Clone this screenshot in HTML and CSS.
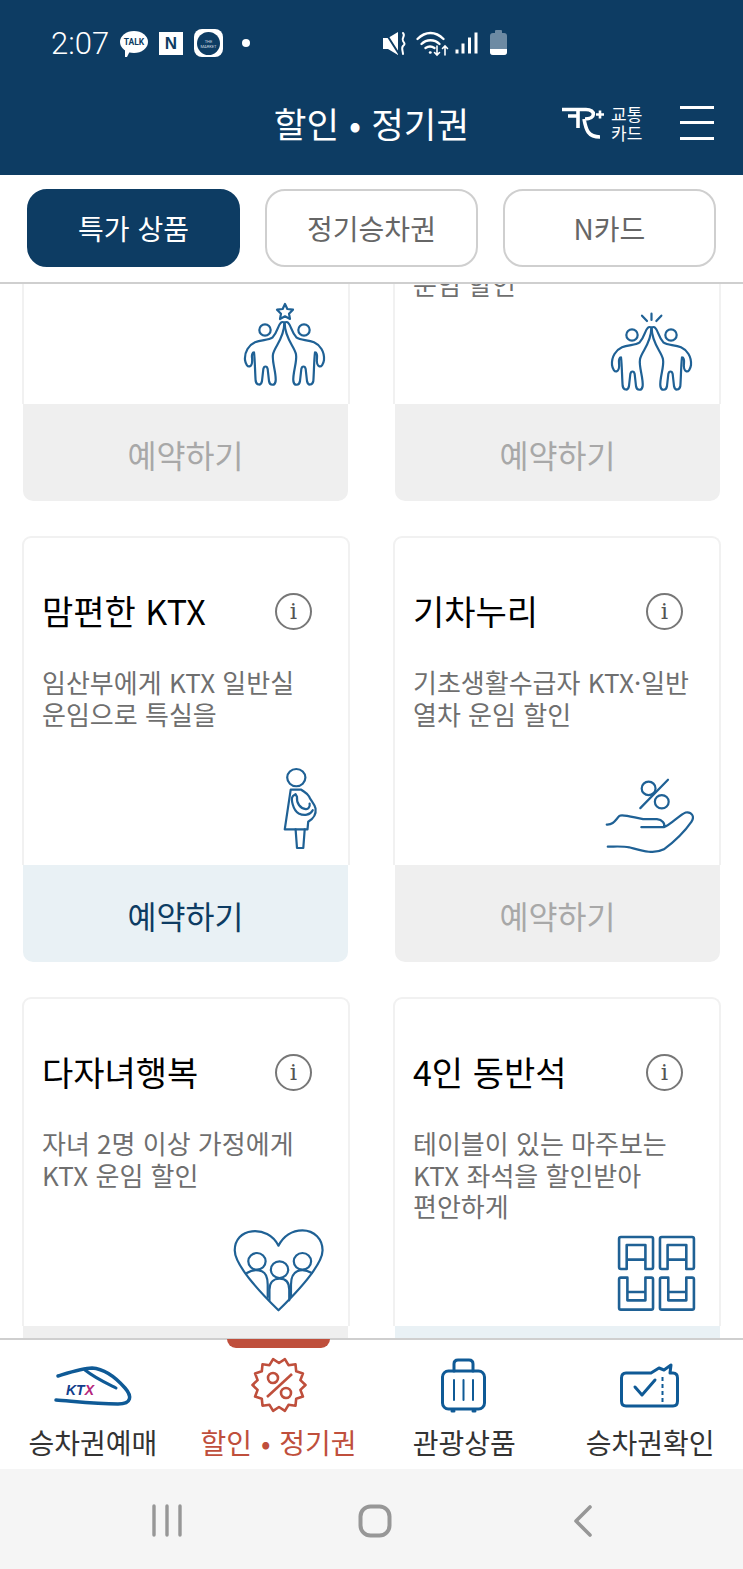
FILE: index.html
```html
<!DOCTYPE html>
<html lang="ko">
<head>
<meta charset="UTF-8" />
<title>할인 · 정기권</title>
<meta name="viewport" content="width=device-width,initial-scale=1" />
<link rel="stylesheet" href="styles.css">
</head>
<body>
<div id="app">
  <header id="top">
    <div id="status-bar">
      <span class="clock">2:07</span>
      <span class="talk">TALK</span>
      <span class="naver">N</span>
      <span class="market"><span>THE<br>MARKET</span></span>
      <span class="dot"></span>
      <svg class="st-icons" viewBox="380 26 130 34" width="130" height="34" fill="none" stroke="#fff" stroke-linecap="round">
        <path d="M383 38h5l10-6v23l-10-6h-5z" fill="#fff" stroke="none"/>
        <path d="M385 32l14 22" stroke="#0d3c63" stroke-width="2"/>
        <path d="M403 33c3 3-2 5 0 8s2 3 0 5 0 5 0 8" stroke-width="2"/>
        <path d="M417.500 39c8-8 18-8 26 0M421.500 44c5-5 13-5 18 0M425.500 48c3-2 6-2 9 0" stroke-width="2.400"/>
        <path d="M430 52.500h.5" stroke-width="2.400"/>
        <path d="M437 46v9M434.500 52.500l2.500 2.500 2.500-2.500M445 55v-9M442.500 48.500l2.500-2.500 2.500 2.500" stroke-width="1.600"/>
        <path d="M457 49.500v4M463 43.500v10M469.500 37.500v16M476 32.500v21" stroke-width="3" stroke-linecap="butt"/>
        <rect x="490" y="33" width="17" height="22" rx="3" fill="#6d8aa3" stroke="none"/>
        <rect x="495" y="30" width="7" height="5" rx="1" fill="#6d8aa3" stroke="none"/>
        <path d="M490 49h17v3a3 3 0 0 1-3 3h-11a3 3 0 0 1-3-3z" fill="#fff" stroke="none"/>
      </svg>
    </div>
    <div id="title-bar">
      <div></div>
      <h1>할인 • 정기권</h1>
      <div class="title-right">
        <svg class="tc-logo" viewBox="560 105 48 36" width="48" height="36" fill="none" stroke="#fff" stroke-width="3.600">
          <path d="M562 109.500H586C596 109.500 596 119 585 119M568 116H577M578 109V128M584 119C586 130 588 137 600 137"/>
          <path d="M596 114.500H604M600 110.500V118.500" stroke-width="2.600"/>
        </svg>
        <span class="tc-text">교통<br>카드</span>
        <button id="menu-btn" aria-label="메뉴"><i></i><i></i><i></i></button>
      </div>
    </div>
  </header>

  <nav id="tabs">
    <button class="tab active">특가 상품</button>
    <button class="tab">정기승차권</button>
    <button class="tab">N카드</button>
  </nav>

  <main id="list">
    <div id="cards">
      <section class="card">
        <div class="card-head">
          <div class="card-title"><h2>힘내라 청춘</h2><span class="info">i</span></div>
          <p>청년에게 KTX 운임 할인</p>
          <svg class="ico hf-a" viewBox="0 0 300 300">
            <path d="M150 27L157 42L174 44L162 56L165 72L150 64L135 72L138 56L126 44L143 42Z"/>
            <g id="high-five">
              <circle cx="90" cy="105" r="17"/>
              <circle cx="207" cy="105" r="17"/>
              <path id="hf-body" d="M137 84C128 92 128 112 112 128C100 136 78 134 60 142C42 150 28 170 30 195C32 208 38 216 44 214C52 212 52 198 51 188C50 180 52 172 57 172C60 195 60 235 62 258C64 270 78 274 81 258L85 222C87 212 96 212 98 222L102 258C104 272 120 274 122 258C124 232 110 200 114 178C118 155 148 130 148 84C148 80 140 80 137 84Z"/>
              <use href="#hf-body" transform="translate(297 0) scale(-1 1)"/>
            </g>
          </svg>
        </div>
        <button class="book off">예약하기</button>
      </section>
      <section class="card">
        <div class="card-head">
          <div class="card-title"><h2>청소년 드림</h2><span class="info">i</span></div>
          <p>만 13세 이상 18세 이하<br>청소년에게 KTX 등<br>운임 할인</p>
          <svg class="ico hf-b" viewBox="0 0 300 300">
            <use href="#high-five"/>
            <path d="M148.500 41V60M120 47L135 63M178 47L163 63"/>
          </svg>
        </div>
        <button class="book off">예약하기</button>
      </section>

      <section class="card">
        <div class="card-head">
          <div class="card-title"><h2>맘편한 KTX</h2><span class="info">i</span></div>
          <p>임산부에게 KTX 일반실<br>운임으로 특실을</p>
          <svg class="ico mom" viewBox="240 80 100 250" preserveAspectRatio="none">
            <circle cx="278" cy="112" r="26"/>
            <path d="M262 148L245 268H310L312 245C328 235 335 220 333 205C330 190 318 180 314 168C308 158 300 155 292 148Z"/>
            <path d="M268 168C262 175 268 210 285 220C300 228 318 225 325 210M268 168L276 162L280 170C278 190 290 205 305 207C312 208 318 200 316 190"/>
            <path d="M276 268L280 324H298L302 268"/>
          </svg>
        </div>
        <button class="book on">예약하기</button>
      </section>
      <section class="card">
        <div class="card-head">
          <div class="card-title"><h2>기차누리</h2><span class="info">i</span></div>
          <p>기초생활수급자 KTX·일반<br>열차 운임 할인</p>
          <svg class="ico hand" viewBox="1170 115 260 230" preserveAspectRatio="none">
            <path d="M1352 120L1272 205"/>
            <circle cx="1296" cy="146" r="20"/>
            <circle cx="1334" cy="186" r="20"/>
            <path d="M1175 254C1195 255 1200 240 1212 228C1220 222 1250 232 1280 238L1320 238C1335 240 1345 250 1340 262L1275 262M1340 262C1360 255 1385 225 1403 218C1420 215 1430 230 1420 245C1400 275 1370 305 1340 328C1310 345 1270 330 1240 322C1220 318 1200 320 1178 320"/>
          </svg>
        </div>
        <button class="book off">예약하기</button>
      </section>

      <section class="card">
        <div class="card-head">
          <div class="card-title"><h2>다자녀행복</h2><span class="info">i</span></div>
          <p>자녀 2명 이상 가정에게<br>KTX 운임 할인</p>
          <svg class="ico family" viewBox="95 55 265 252" preserveAspectRatio="none">
            <path d="M226 108C210 75 180 62 150 65C120 68 100 90 100 122C100 170 180 255 226 302C272 255 353 170 353 122C353 90 330 62 295 62C265 62 240 80 226 108Z"/>
            <circle cx="164" cy="155" r="25"/>
            <circle cx="295" cy="155" r="25"/>
            <circle cx="229" cy="180" r="25"/>
            <path d="M200 272V240C200 215 215 207 229 207C245 207 257 215 257 240V272"/>
            <path d="M135 190C150 180 165 180 178 185C190 190 195 205 195 225V262M322 190C305 180 290 180 280 185C265 192 262 205 262 225V262"/>
          </svg>
        </div>
        <button class="book off">예약하기</button>
      </section>
      <section class="card">
        <div class="card-head">
          <div class="card-title"><h2>4인 동반석</h2><span class="info">i</span></div>
          <p>테이블이 있는 마주보는<br>KTX 좌석을 할인받아<br>편안하게</p>
          <svg class="ico seats" viewBox="1204 74 228 228" preserveAspectRatio="none">
            <path id="seat-top" d="M1232 176H1215Q1210 176 1210 171V85Q1210 80 1215 80H1303Q1308 80 1308 85V171Q1308 176 1303 176H1286V104H1232V176M1232 148H1286"/>
            <use href="#seat-top" transform="translate(118 0)"/>
            <path id="seat-low" d="M1234 202H1215Q1210 202 1210 207V293Q1210 298 1215 298H1303Q1308 298 1308 293V207Q1308 202 1303 202H1286V270H1234V202M1234 245H1286"/>
            <use href="#seat-low" transform="translate(118 0)"/>
          </svg>
        </div>
        <button class="book on">예약하기</button>
      </section>
    </div>
  </main>

  <footer id="bottom-nav">
    <a class="nav-item">
      <svg class="nav-icon" viewBox="50 1360 86 44" width="86" height="44" fill="none" stroke="#0f5a96" stroke-width="3.500" stroke-linecap="round">
        <path d="M58 1373C71 1369 83 1365 92 1365C106 1366 118 1377 125 1385C132 1393 132 1401 118 1401C95 1401 71 1398 56 1397"/>
        <path d="M85 1367C95 1375 106 1380 116 1385" stroke-width="3"/>
        <text x="66" y="1392" class="ktx">KT<tspan class="ktx-x">X</tspan></text>
      </svg>
      <span>승차권예매</span>
    </a>
    <a class="nav-item current">
      <svg class="nav-icon" viewBox="-28 -28 56 56" width="56" height="56" fill="none" stroke="#bf4f3c" stroke-width="2.600" stroke-linejoin="round">
        <path d="M26.500 0L21.400 4.900L23.900 11.500L17.200 13.700L16.500 20.700L9.500 19.800L5.900 25.800L0 22L-5.900 25.800L-9.500 19.800L-16.500 20.700L-17.200 13.700L-23.900 11.500L-21.400 4.900L-26.500 0L-21.400 -4.900L-23.900 -11.500L-17.200 -13.700L-16.500 -20.700L-9.500 -19.800L-5.900 -25.800L0 -22L5.900 -25.800L9.500 -19.800L16.500 -20.700L17.200 -13.700L23.900 -11.500L21.400 -4.900Z"/>
        <path d="M-12 12L13 -11"/>
        <circle cx="-6" cy="-7" r="5"/>
        <circle cx="7" cy="8" r="5"/>
      </svg>
      <span>할인 • 정기권</span>
    </a>
    <a class="nav-item">
      <svg class="nav-icon" viewBox="440 1354 52 56" width="52" height="56" fill="none" stroke="#0f5a96" stroke-width="3" stroke-linecap="round">
        <rect x="444.500" y="1368" width="42" height="38" rx="6"/>
        <path d="M456 1368V1361Q456 1357 460 1357H471Q475 1357 475 1361V1368"/>
        <path d="M456 1377V1397M465.500 1377V1397M475 1377V1397" stroke-width="2"/>
        <path d="M454 1408h2M475 1408h2"/>
      </svg>
      <span>관광상품</span>
    </a>
    <a class="nav-item">
      <svg class="nav-icon" viewBox="618 1358 66 50" width="66" height="50" fill="none" stroke="#0f5a96" stroke-width="3" stroke-linecap="round" stroke-linejoin="round">
        <path d="M652 1371H627Q622.500 1371 622.500 1376V1399Q622.500 1404 627 1404H674Q678.500 1404 678.500 1399V1376Q678.500 1371 674 1371H671L672 1363L665 1368L660 1366L652 1371Z"/>
        <path d="M663.500 1375V1401" stroke-width="2" stroke-dasharray="4 3" stroke-linecap="butt"/>
        <path d="M636 1385L643 1393L656 1378"/>
      </svg>
      <span>승차권확인</span>
    </a>
  </footer>

  <div id="system-nav">
    <svg viewBox="145 1500 455 42" width="455" height="42" fill="none" stroke="#979797" stroke-linecap="round" stroke-linejoin="round">
      <path d="M154 1506V1535M167 1506V1535M180 1506V1535" stroke-width="3.400"/>
      <rect x="360.500" y="1506.500" width="29" height="29" rx="10" stroke-width="4"/>
      <path d="M590 1507L576 1521L590 1535" stroke-width="3.600"/>
    </svg>
  </div>
</div>
</body>
</html>
```

FILE: styles.css
```css
:root {
  --navy: #0d3c63;
  --line: #cfcfcf;
  --icon: #1f6195;
  --red: #bf4f3c;
}
html, body {
  height: 100%;
  margin: 0;
  padding: 0;
  background: #fff;
  font-family: 'Noto Sans CJK KR', 'Noto Sans', sans-serif;
}
button {
  font-family: inherit;
  cursor: pointer;
}
#app {
  height: 1569px;
  display: flex;
  flex-direction: column;
  overflow: hidden;
}

/* Header */
#top {
  flex: none;
  height: 175px;
  background: var(--navy);
  color: #fff;
}
#status-bar {
  height: 86px;
  box-sizing: border-box;
  padding-left: 51px;
  display: flex;
  align-items: center;
}
.clock {
  font-family: Roboto, sans-serif;
  font-size: 31px;
  font-weight: 300;
  width: 69px;
}
.talk {
  position: relative;
  width: 28px;
  height: 22px;
  margin-top: -3px;
  border-radius: 50%;
  background: #fff;
  color: var(--navy);
  font-family: Roboto, sans-serif;
  font-size: 8.500px;
  font-weight: 700;
  line-height: 22px;
  text-align: center;
}
/* bubble tail */
.talk::after {
  content: "";
  position: absolute;
  left: 5px;
  top: 18px;
  border-left: 2px solid #fff;
  border-right: 4px solid transparent;
  border-top: 8px solid #fff;
}
.naver {
  width: 24px;
  height: 23px;
  margin-left: 11px;
  background: #fff;
  color: var(--navy);
  font-family: 'Liberation Sans', sans-serif;
  font-size: 17px;
  font-weight: 700;
  line-height: 23px;
  text-align: center;
}
.market {
  width: 29px;
  height: 28px;
  margin-left: 11px;
  border-radius: 8px;
  background: #fff;
  display: flex;
  align-items: center;
  justify-content: center;
}
.market span {
  width: 23px;
  height: 23px;
  border-radius: 50%;
  background: var(--navy);
  color: #cfd8e0;
  font-family: Roboto, sans-serif;
  font-size: 4px;
  line-height: 5px;
  text-align: center;
  padding-top: 7px;
  box-sizing: border-box;
}
.dot {
  width: 8px;
  height: 8px;
  margin-left: 19px;
  border-radius: 50%;
  background: #fff;
}
.st-icons {
  margin-left: 130px;
}
#title-bar {
  height: 89px;
  display: grid;
  grid-template-columns: 1fr auto 1fr;
  align-items: center;
  margin-top: -8px;
}
h1 {
  margin: 0;
  font-size: 35.500px;
  font-weight: 400;
  line-height: 50px;
}
.title-right {
  display: flex;
  align-items: center;
  justify-content: flex-end;
  padding-right: 29px;
}
.tc-text {
  font-size: 17px;
  line-height: 19px;
  margin-left: 3px;
  width: 31px;
  white-space: nowrap;
}
#menu-btn {
  width: 34px;
  height: 34px;
  margin-left: 38px;
  padding: 0;
  border: none;
  background: none;
  display: flex;
  flex-direction: column;
  justify-content: space-between;
}
#menu-btn i {
  display: block;
  height: 3px;
  background: #fff;
}

/* Tabs */
#tabs {
  flex: none;
  height: 109px;
  box-sizing: border-box;
  padding: 14px 27px 0 27px;
  border-bottom: 2px solid var(--line);
  display: flex;
  gap: 25px;
}
.tab {
  flex: 1;
  height: 78px;
  box-sizing: border-box;
  border: 2px solid var(--line);
  border-radius: 20px;
  background: #fff;
  color: #666;
  font-size: 28px;
  padding: 0;
}
.tab.active {
  background: var(--navy);
  border-color: var(--navy);
  color: #fff;
}

/* Cards */
#list {
  flex: 1;
  min-height: 0;
  overflow: hidden;
}
#cards {
  margin-top: -209px;
  padding-left: 22px;
  display: grid;
  grid-template-columns: 328px 328px;
  column-gap: 43px;
  row-gap: 35px;
}
.card {
  display: flex;
  flex-direction: column;
  align-items: stretch;
}
.card-head {
  height: 329px;
  box-sizing: border-box;
  padding: 54px 0 0 18px;
  border: 2px solid #f1f1f1;
  border-bottom: none;
  border-radius: 9px 9px 0 0;
  display: flex;
  flex-direction: column;
}
.card-title {
  height: 38px;
  padding-right: 36px;
  display: flex;
  align-items: center;
  justify-content: space-between;
}
h2 {
  margin: 0;
  color: #000;
  font-size: 34px;
  font-weight: 400;
  line-height: 38px;
}
.info {
  width: 37px;
  height: 37px;
  box-sizing: border-box;
  border: 2px solid #777;
  border-radius: 50%;
  color: #555;
  font-family: 'DejaVu Serif', serif;
  font-size: 23px;
  line-height: 32px;
  text-align: center;
}
.card-head p {
  margin: 36px 0 0 0;
  color: #6f6f6f;
  font-size: 26px;
  line-height: 31.500px;
  white-space: nowrap;
}
.ico {
  margin-top: auto;
  align-self: flex-end;
  fill: none;
  stroke: var(--icon);
  stroke-width: 2.200px;
  stroke-linecap: round;
  stroke-linejoin: round;
  overflow: visible;
}
.ico * {
  vector-effect: non-scaling-stroke;
}
.hf-a {
  width: 100px;
  height: 100px;
  margin-right: 13px;
  margin-bottom: 9px;
}
.hf-b {
  width: 100px;
  height: 100px;
  margin-right: 17px;
  margin-bottom: 11px;
}
.mom {
  width: 35px;
  height: 83px;
  margin-right: 30px;
  margin-bottom: 15px;
}
.hand {
  width: 90px;
  height: 77px;
  margin-right: 24px;
  margin-bottom: 10px;
}
.family {
  width: 92px;
  height: 84px;
  margin-right: 23px;
  margin-bottom: 14px;
}
.seats {
  width: 79px;
  height: 76px;
  margin-right: 23px;
  margin-bottom: 15px;
  stroke-width: 2.600px;
}
.book {
  height: 97px;
  margin: 0 2px 0 1px;
  padding: 3px 0 0 0;
  border: none;
  border-radius: 0 0 10px 10px;
  font-size: 31.500px;
}
.card:nth-child(even) .book {
  margin: 0 1px 0 2px;
}
.book.off {
  background: #efefef;
  color: #a8a8a8;
}
.book.on {
  background: #e9f1f5;
  color: var(--navy);
}

/* Bottom navigation */
#bottom-nav {
  flex: none;
  height: 131px;
  box-sizing: border-box;
  border-top: 2px solid var(--line);
  background: #fff;
  display: grid;
  grid-template-columns: repeat(4, 1fr);
  position: relative;
}
.nav-item {
  position: relative;
  height: 129px;
  color: #333;
  font-size: 28px;
  display: flex;
  flex-direction: column;
  align-items: center;
  white-space: nowrap;
}
.nav-icon {
  margin-top: 17px;
  height: 56px;
}
.nav-item span {
  margin-top: 9px;
  line-height: 40px;
  word-spacing: 1px;
}
.nav-item.current {
  color: var(--red);
}
.nav-item.current::before {
  content: "";
  position: absolute;
  top: -1px;
  left: 41px;
  width: 103px;
  height: 9px;
  background: var(--red);
  border-radius: 0 0 10px 10px;
}
.ktx {
  fill: #123f8c;
  stroke: none;
  font-family: 'Liberation Sans', sans-serif;
  font-size: 14px;
  font-weight: 700;
  font-style: italic;
}
.ktx-x {
  fill: #b5267c;
}

/* System navigation */
#system-nav {
  flex: none;
  height: 100px;
  box-sizing: border-box;
  background: #f5f5f5;
  padding: 31px 0 0 145px;
}
```
